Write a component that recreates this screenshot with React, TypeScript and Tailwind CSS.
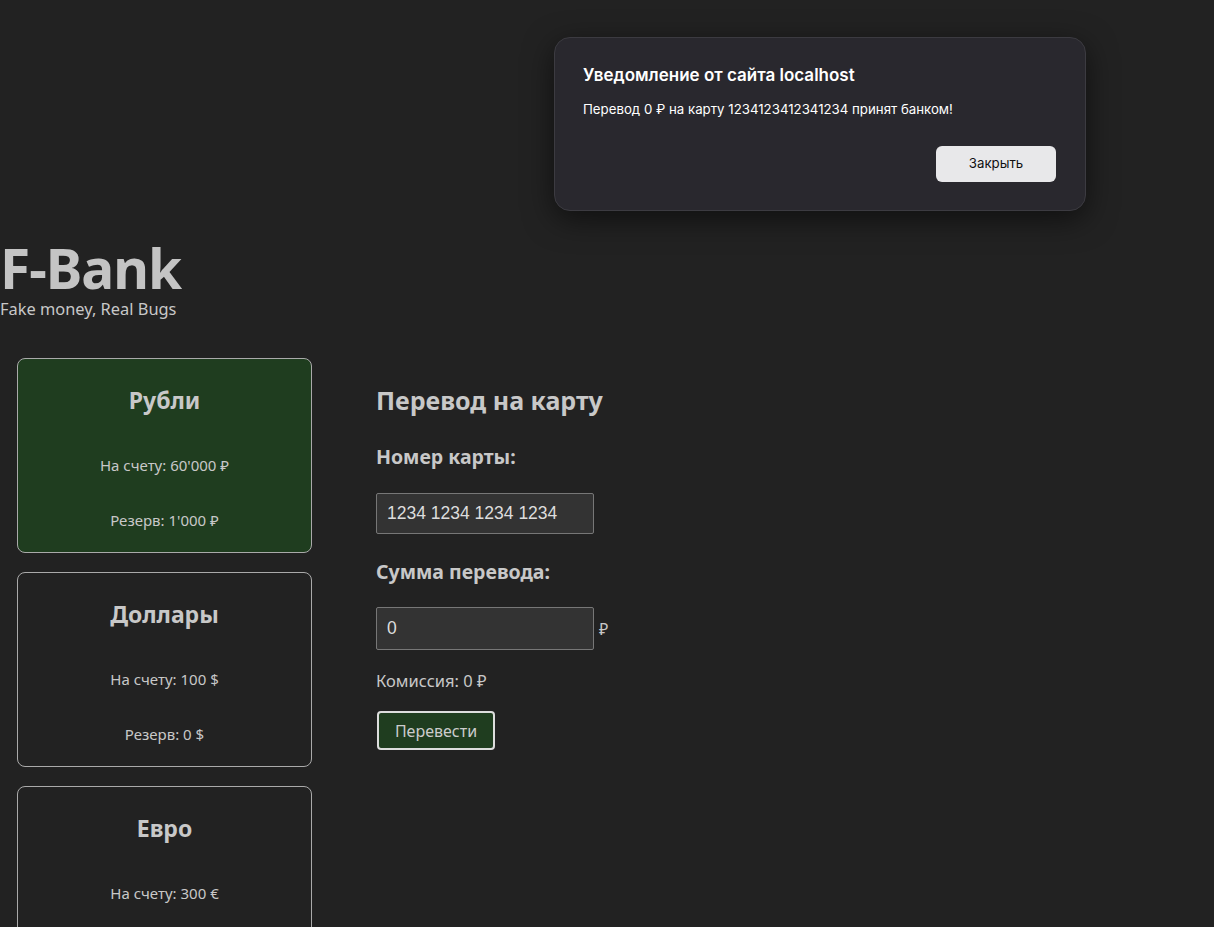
const accounts = [
  { name: 'Рубли', balance: "60'000 ₽", reserve: "1'000 ₽", active: true },
  { name: 'Доллары', balance: '100 $', reserve: '0 $', active: false },
  { name: 'Евро', balance: '300 €', reserve: '0 €', active: false },
];

export default function App() {
  return (
    <div className="relative h-[927px] bg-[#222222] text-[#c8c8c8] overflow-hidden" style={{ fontFamily: '"Noto Sans", "Open Sans", sans-serif' }}>
      <header className="pt-[237px]">
        <h1 className="text-[55px] font-bold leading-[62px] tracking-[-1px] text-[#c4c4c4]">F-Bank</h1>
        <p className="text-[16.4px] leading-[20px]">Fake money, Real Bugs</p>
      </header>

      <main className="flex mt-[39px]">
        {/* Accounts list */}
        <div className="flex flex-col gap-[19px] pl-[17px] w-[312px]">
          {accounts.map((acc) => (
            <div
              key={acc.name}
              className={`w-[295px] h-[195px] shrink-0 rounded-[8px] border border-[#aaaaaa] flex flex-col items-center ${
                acc.active ? 'bg-[#1f3d1f]' : 'bg-[#222222]'
              }`}
            >
              <h2 className="mt-[26px] text-[23px] font-bold leading-[30px]">{acc.name}</h2>
              <p className="mt-[40px] text-[15px] leading-[20px]">На счету: {acc.balance}</p>
              <p className="mt-[35px] text-[15px] leading-[20px]">Резерв: {acc.reserve}</p>
            </div>
          ))}
        </div>

        {/* Transfer form */}
        <div className="ml-[64px] flex flex-col items-start">
          <h2 className="mt-[27px] text-[25px] font-bold leading-[30px]">Перевод на карту</h2>
          <label className="mt-[30px] text-[19.5px] font-bold leading-[24px]">Номер карты:</label>
          <input
            readOnly
            value="1234 1234 1234 1234"
            className="mt-[24px] w-[218px] h-[41px] px-[10px] bg-[#333333] border border-[#777777] rounded-[2px] text-[17.5px] text-[#dddddd] outline-none"
            style={{ fontFamily: '"Liberation Sans", Arial, sans-serif' }}
          />
          <label className="mt-[26px] text-[19.5px] font-bold leading-[24px]">Сумма перевода:</label>
          <div className="mt-[23px] flex items-center gap-[5px]">
            <input
              readOnly
              value="0"
              className="w-[218px] h-[43px] px-[10px] bg-[#333333] border border-[#777777] rounded-[2px] text-[17.5px] text-[#dddddd] outline-none"
              style={{ fontFamily: '"Liberation Sans", Arial, sans-serif' }}
            />
            <span className="text-[16px]">₽</span>
          </div>
          <p className="mt-[19px] text-[16.5px] leading-[24px]">Комиссия: 0 ₽</p>
          <button className="mt-[18px] ml-[1px] w-[118px] h-[39px] bg-[#1f3d1f] border-2 border-[#dddddd] rounded-[4px] text-[16px] text-[#cccccc]">
            Перевести
          </button>
        </div>
      </main>

      {/* Browser alert */}
      <div
        className="absolute left-[554px] top-[37px] w-[532px] h-[174px] rounded-[16px] bg-[#29282e] border border-[#3c3b41] px-[28px] pt-[26px] text-white shadow-[0_8px_30px_rgba(0,0,0,0.55)]"
        style={{ fontFamily: 'Inter, Roboto, sans-serif' }}
      >
        <h3 className="text-[17px] font-semibold leading-[22px]">Уведомление от сайта localhost</h3>
        <p className="mt-[14px] text-[13.25px] leading-[18px]">Перевод 0 ₽ на карту 1234123412341234 принят банком!</p>
        <div className="flex justify-end mt-[28px]">
          <button className="mr-[1px] w-[120px] h-[36px] rounded-[6px] bg-[#e8e8ea] text-[13.25px] text-[#111111]">Закрыть</button>
        </div>
      </div>
    </div>
  );
}
